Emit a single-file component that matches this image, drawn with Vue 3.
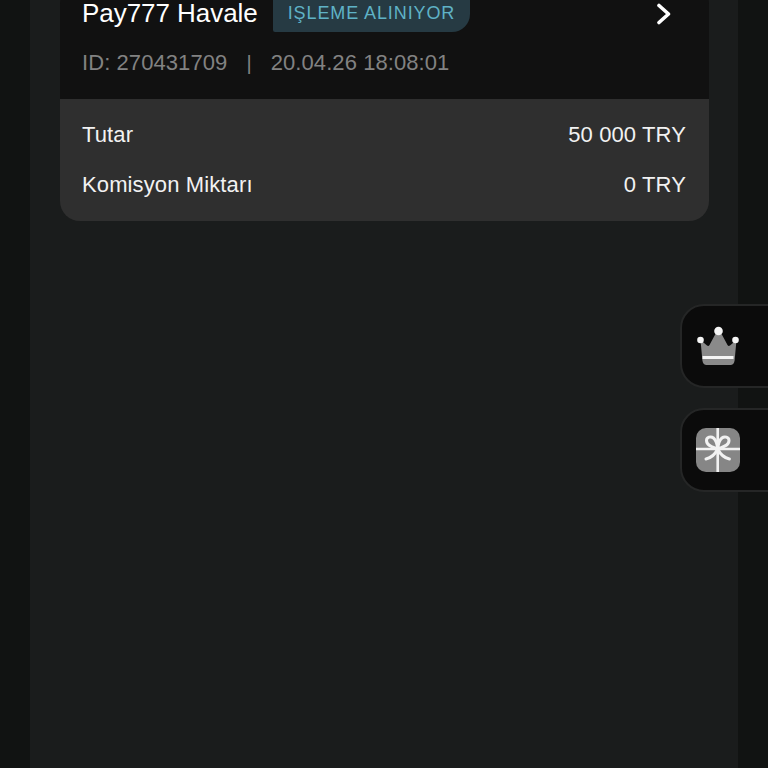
<template>
  <div class="page">
    <div class="column">
      <div class="card">
        <div class="card-head">
          <div class="title-row">
            <span class="title">Pay777 Havale</span>
            <span class="badge">IŞLEME ALINIYOR</span>
            <svg class="chevron" width="16" height="22" viewBox="0 0 16 22">
              <path d="M3 2.5 L12.5 11 L3 19.5" fill="none" stroke="#fff" stroke-width="3.6" stroke-linecap="round" stroke-linejoin="round" />
            </svg>
          </div>
          <div class="meta">
            <span>ID: 270431709</span>
            <span class="sep">|</span>
            <span>20.04.26 18:08:01</span>
          </div>
        </div>
        <div class="card-body">
          <div class="row" v-for="row in rows" :key="row.label">
            <span>{{ row.label }}</span>
            <span>{{ row.value }}</span>
          </div>
        </div>
      </div>
    </div>

    <div class="side">
      <button class="side-btn">
        <svg width="44" height="44" viewBox="0 0 44 44">
          <path d="M4.5 16 L11 21.5 Q12.5 22.5 13.5 21 L20.5 8 C21.3 6.8 23.7 6.8 24.5 8 L31.5 21 Q32.5 22.5 34 21.5 L40.5 16 L38.6 36.5 C38.2 39.8 36.5 41 34.5 41 H10.5 C8.5 41 6.8 39.8 6.4 36.5 Z" fill="#8a8a8a" />
          <rect x="6.5" y="32" width="31" height="3" fill="#f4f4f4" />
          <circle cx="22.5" cy="7" r="4.3" fill="#f6f6f6" />
          <circle cx="4.5" cy="16" r="3.3" fill="#f6f6f6" />
          <circle cx="39.5" cy="16" r="3.3" fill="#f6f6f6" />
        </svg>
      </button>
      <button class="side-btn">
        <svg width="44" height="44" viewBox="0 0 44 44">
          <rect x="0" y="0" width="44" height="44" rx="10" fill="#868686" />
          <path d="M21.7 0 V44 M0 21 H44" stroke="#f2f2f2" stroke-width="2.6" fill="none" />
          <path d="M21.7 21 C17 19 10.5 18 10.5 12.5 C10.5 9 15 8 17.5 10 C20 12 21.2 16 21.7 21 C22.2 16 23.4 12 25.9 10 C28.4 8 33 9 33 12.5 C33 18 26.4 19 21.7 21 Z" fill="none" stroke="#f2f2f2" stroke-width="3" stroke-linejoin="round" />
          <path d="M21.7 21 C19.2 26 15 30 10 31 M21.7 21 C24.2 26 28.4 30 33.4 31" fill="none" stroke="#f2f2f2" stroke-width="3" stroke-linecap="round" />
        </svg>
      </button>
    </div>
  </div>
</template>

<script setup>
const rows = [
  { label: 'Tutar', value: '50 000 TRY' },
  { label: 'Komisyon Miktarı', value: '0 TRY' }
]
</script>

<style scoped>
.page {
  position: relative;
  height: 768px;
  padding: 0 30px;
  overflow: hidden;
  box-sizing: border-box;
  background: #111312;
  font-family: "Liberation Sans", Arial, sans-serif;
}

.column {
  display: flow-root;
  height: 100%;
  padding: 0 29px 0 30px;
  background: #1a1c1c;
}

.card {
  margin-top: -16px;
  border-radius: 20px;
  overflow: hidden;
}

.card-head {
  height: 115px;
  padding: 0 37px 0 22px;
  box-sizing: border-box;
  background: #111111;
}

.title-row {
  display: flex;
  align-items: flex-start;
}

.title {
  margin-top: 16px;
  color: #fff;
  font-size: 26px;
  letter-spacing: -0.05px;
  line-height: 26px;
}

.badge {
  height: 48px;
  margin-left: 15px;
  padding: 0 15px;
  border-radius: 16px 16px 18px 2px;
  background: #263a43;
  color: #5fb2c6;
  font-size: 18px;
  letter-spacing: 0.9px;
  line-height: 59px;
}

.chevron {
  margin: 19px 0 0 auto;
}

.meta {
  display: flex;
  gap: 19px;
  margin-top: 18px;
  color: #828282;
  font-size: 22px;
  letter-spacing: 0.08px;
  line-height: 26px;
}

.sep {
  font-size: 20px;
}

.card-body {
  display: flex;
  flex-direction: column;
  gap: 20px;
  height: 122px;
  padding: 21px 23px 0 22px;
  box-sizing: border-box;
  background: #2f2f2f;
}

.row {
  display: flex;
  justify-content: space-between;
  color: #f2f2f2;
  font-size: 22px;
  letter-spacing: 0.12px;
  line-height: 30px;
}

.side {
  position: absolute;
  top: 304px;
  left: 680px;
  display: flex;
  flex-direction: column;
  gap: 20px;
}

.side-btn {
  display: flex;
  align-items: center;
  width: 110px;
  height: 84px;
  padding: 0 0 0 14px;
  border: 2px solid #252626;
  border-radius: 24px;
  box-sizing: border-box;
  background: #0b0b0b;
}
</style>

<style>
html,
body {
  background: #111312;
}
</style>
